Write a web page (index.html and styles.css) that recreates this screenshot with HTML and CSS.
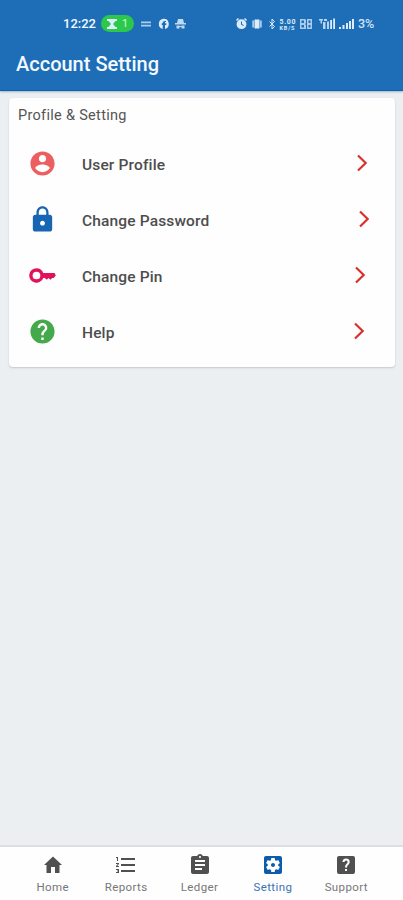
FILE: index.html
```
<!DOCTYPE html>
<html lang="en">
<head>
<meta charset="utf-8">
<title>Account Setting</title>
<link rel="stylesheet" href="styles.css">
</head>
<body>
<header class="header">
  <div class="status">
    <span class="time">12:22</span>
    <span class="pill"><svg width="10" height="10" viewBox="0 0 10 10"><path d="M0 0h10v2H8.500L6 5l2.500 3H10v2H0V8h1.500L4 5 1.500 2H0z"/></svg><span>1</span></span>
    <svg class="notices" width="46" height="12" viewBox="0 0 46 12">
      <path opacity=".75" d="M0 3.500h10v1.800H0zM0 6.700h10v1.800H0z"/>
      <path fill-rule="evenodd" d="M22.500 .8a5.200 5.200 0 0 1 1.500 10.200V7h1.300V5.300H24V4h1V3h-1c-1.500 0-2.300.8-2.300 2.300h-1V7h1v4A5.200 5.200 0 0 1 22.500 .8z"/>
      <path opacity=".85" d="M37 1h5l1 4h2v1.500H34V5h2zM35.500 7.500h3v3h-3zM40.500 7.500h3v3h-3zM38 8h3v1h-3z"/>
    </svg>
    <svg class="system" width="120" height="14" viewBox="0 0 120 14">
      <path fill-rule="evenodd" d="M5.500 2.300a4.900 4.900 0 1 1 0 9.800 4.900 4.900 0 0 1 0-9.800zM5 4.500v3l2.300 1.500.6-.8L6 7V4.500zM0 3l2-2 1 1-2 2zM9 1l2 2-1 1-2-2z"/>
      <path d="M18.500 2.500h5v9h-5z"/><path opacity=".8" d="M16.300 3.500h1.600v7h-1.600zM24.100 3.500h1.600v7h-1.600z"/>
      <path fill="none" stroke="#dcecff" d="M33.500 4.500l5 5-2.500 2.500V2l2.500 2.500-5 5"/>
      <text x="43.500" y="6.500" textLength="16">5.00</text><text x="43.500" y="13" class="unit" textLength="15">KB/S</text>
      <path opacity=".75" fill-rule="evenodd" d="M64 2h5l1 1v3l-1 1 1 1v4H64zM65.500 3.500V6h2.500V3.500zM65.500 8v2.500h2.500V8zM71 2h5v10h-5zM72.500 3.500V6h2V3.500zM72.500 8v2.500h2V8z"/>
      <path opacity=".8" d="M83 2h4v1.500h-1v3h-1.500v-3H83zM88 2h3v2h-3zM87 5h2.500v7H87zM91 4.500h2V12h-2z"/><path d="M94.200 3h1.800v9h-1.800zM97.200 1.500H99V12h-1.800zM103 10h2v2h-2zM106.500 8h2v4h-2zM110 6h2v6h-2zM113 4h2v8h-2zM116 2h2v10h-2z"/>
    </svg>
    <span class="battery">3%</span>
  </div>
  <h1>Account Setting</h1>
</header>
<main class="content">
  <section class="card">
    <h2>Profile &amp; Setting</h2>
    <div class="row">
      <svg class="icon user" viewBox="0 0 24 24"><path d="M12 2C6.480 2 2 6.480 2 12s4.480 10 10 10 10-4.480 10-10S17.520 2 12 2zm0 3c1.660 0 3 1.340 3 3s-1.340 3-3 3-3-1.340-3-3 1.340-3 3-3zm0 14.200c-2.500 0-4.710-1.280-6-3.220.03-1.990 4-3.080 6-3.080 1.990 0 5.970 1.090 6 3.080-1.290 1.940-3.500 3.220-6 3.220z"/></svg>
      <span class="label">User Profile</span>
      <svg class="chevron first" viewBox="0 0 12 18"><path d="M2 1.500L9.700 9 2 16.500"/></svg>
    </div>
    <div class="row">
      <svg class="icon lock" viewBox="0 0 24 24"><path d="M18 8h-1V6c0-2.760-2.240-5-5-5S7 3.240 7 6v2H6c-1.100 0-2 .9-2 2v10c0 1.100.9 2 2 2h12c1.100 0 2-.9 2-2V10c0-1.100-.9-2-2-2zm-6 9c-1.100 0-2-.9-2-2s.9-2 2-2 2 .9 2 2-.9 2-2 2zm3.100-9H8.900V6c0-1.710 1.390-3.100 3.100-3.100 1.710 0 3.100 1.390 3.100 3.100v2z"/></svg>
      <span class="label">Change Password</span>
      <svg class="chevron second" viewBox="0 0 12 18"><path d="M2 1.500L9.700 9 2 16.500"/></svg>
    </div>
    <div class="row">
      <svg class="icon key" viewBox="0 0 24 24"><path fill-rule="evenodd" d="M7 6a6 6 0 1 0 5.650 8H14l1.500 1.500L17 14l1.500 1.500L20 14h1.300L23 12l-1-2h-9.350A6 6 0 0 0 7 6zm0 2.800a3.200 3.200 0 1 1 0 6.400 3.200 3.200 0 0 1 0-6.400z"/></svg>
      <span class="label">Change Pin</span>
      <svg class="chevron third" viewBox="0 0 12 18"><path d="M2 1.500L9.700 9 2 16.500"/></svg>
    </div>
    <div class="row">
      <svg class="icon help" viewBox="0 0 24 24"><path d="M12 2C6.480 2 2 6.480 2 12s4.480 10 10 10 10-4.480 10-10S17.520 2 12 2zm1 17h-2v-2h2v2zm2.070-7.750l-.9.920C13.450 12.900 13 13.500 13 15h-2v-.5c0-1.100.45-2.100 1.170-2.830l1.240-1.260c.37-.36.590-.86.590-1.410 0-1.100-.9-2-2-2s-2 .9-2 2H8c0-2.210 1.790-4 4-4s4 1.790 4 4c0 .88-.36 1.680-.93 2.250z"/></svg>
      <span class="label">Help</span>
      <svg class="chevron fourth" viewBox="0 0 12 18"><path d="M2 1.500L9.700 9 2 16.500"/></svg>
    </div>
  </section>
</main>
<nav class="tabs">
  <a class="tab"><svg viewBox="0 0 24 24"><path d="M10 20v-6h4v6h4.500v-8H21L12 3.500 3 12h2.500v8z"/></svg><span>Home</span></a>
  <a class="tab"><svg viewBox="0 0 24 24"><path d="M2 17h2v.5H3v1h1v.5H2v1h3v-4H2v1zm1-9h1V4H2v1h1v3zm-1 3h1.800L2 13.100v.9h3v-1H3.200L5 10.900V10H2v1zm5-6v2h14V5H7zm0 14h14v-2H7v2zm0-6h14v-2H7v2z"/></svg><span>Reports</span></a>
  <a class="tab"><svg viewBox="0 0 24 24"><path d="M19 3h-4.180C14.400 1.840 13.300 1 12 1c-1.300 0-2.400.84-2.820 2H5c-1.100 0-2 .9-2 2v14c0 1.100.9 2 2 2h14c1.100 0 2-.9 2-2V5c0-1.100-.9-2-2-2zm-7 0c.55 0 1 .45 1 1s-.45 1-1 1-1-.45-1-1 .45-1 1-1zm2 14H7v-2h7v2zm3-4H7v-2h10v2zm0-4H7V7h10v2z"/></svg><span>Ledger</span></a>
  <a class="tab active"><svg viewBox="0 0 24 24"><path d="M12 10c-1.100 0-2 .9-2 2s.9 2 2 2 2-.9 2-2-.9-2-2-2zm7-7H5c-1.110 0-2 .9-2 2v14c0 1.100.89 2 2 2h14c1.110 0 2-.9 2-2V5c0-1.100-.89-2-2-2zm-1.750 9c0 .23-.02.46-.05.680l1.480 1.160c.13.110.17.300.08.450l-1.400 2.420c-.09.150-.27.210-.43.150l-1.740-.7c-.36.280-.76.510-1.180.690l-.26 1.850c-.03.170-.18.300-.35.300h-2.800c-.17 0-.32-.13-.35-.29l-.26-1.850c-.43-.18-.82-.41-1.180-.69l-1.740.7c-.16.060-.34 0-.43-.15l-1.400-2.420c-.09-.15-.05-.34.080-.45l1.480-1.160c-.03-.23-.05-.46-.05-.69 0-.23.020-.46.050-.68l-1.480-1.160c-.13-.11-.17-.3-.08-.45l1.400-2.420c.09-.15.270-.21.430-.15l1.740.7c.36-.28.760-.51 1.180-.69l.26-1.850c.03-.17.180-.3.350-.3h2.800c.17 0 .32.130.35.290l.26 1.850c.43.180.82.410 1.180.690l1.740-.7c.16-.06.340 0 .430.150l1.400 2.420c.09.150.050.340-.08.450l-1.480 1.160c.03.230.050.460.050.690z"/></svg><span>Setting</span></a>
  <a class="tab"><svg viewBox="0 0 24 24"><path fill-rule="evenodd" d="M5 3h14a2 2 0 0 1 2 2v14a2 2 0 0 1-2 2H5a2 2 0 0 1-2-2V5a2 2 0 0 1 2-2zm6 13v2h2v-2zm-2.500-7h2a1.600 1.600 0 1 1 3.200 0c0 1.600-2.700 2-2.700 5.500h2c0-2.400 2.700-3 2.700-5.500a3.600 3.600 0 0 0-7.200 0z"/></svg><span>Support</span></a>
</nav>
</body>
</html>
```
FILE: styles.css
```
* { box-sizing: border-box; }
body {
  margin: 0;
  height: 900px;
  display: flex;
  flex-direction: column;
  background: #ebeff2;
  font-family: Roboto, sans-serif;
  overflow: hidden;
}
svg { display: block; flex: none; }
.header {
  height: 91px;
  background: #1e6eb7;
  border-bottom: 1px solid #1460a8;
  box-shadow: 0 1px 2px #9fb5c9;
  color: #f4f9ff;
}
.status {
  display: flex;
  align-items: center;
  height: 31px;
  padding: 16px 0 0 63px;
  fill: #dcecff;
}
.time { width: 38px; font-size: 13px; font-weight: 500; }
.pill {
  display: flex;
  align-items: center;
  justify-content: center;
  gap: 5px;
  width: 33px;
  height: 17px;
  border-radius: 9px;
  background: #2cc84b;
  color: #d2f8da;
  font-size: 11px;
}
.notices { margin-left: 7px; }
.system { margin-left: 49px; }
.system text { font: 700 7px Roboto, sans-serif; }
.system .unit { font-size: 5.500px; }
.battery { margin-left: 2px; font-size: 12.500px; font-weight: 500; color: #cfe3f8; }
h1 {
  margin: 21px 0 0 16px;
  font-size: 20px;
  line-height: 24px;
  font-weight: 500;
}
.content { flex: 1; padding: 7px 8px 0 9px; }
.card {
  height: 269px;
  padding-top: 9px;
  border-radius: 4px;
  background: #fefefe;
  box-shadow: 0 1px 2px #c4c8cc;
}
h2 {
  margin: 0 0 0 9px;
  font-size: 14.500px;
  line-height: 18px;
  font-weight: 400;
  letter-spacing: .3px;
  color: #555;
}
.row {
  display: flex;
  align-items: center;
  height: 56px;
  padding: 0 25px 0 19px;
}
h2 + .row { margin-top: 12px; }
.icon { width: 29px; height: 29px; margin-top: -4px; }
.user { fill: #ec5f60; }
.lock { fill: #1766b4; }
.key { fill: #e0125b; }
.help { fill: #43a94a; }
.label {
  margin-left: 25px;
  font-size: 15.500px;
  font-weight: 500;
  letter-spacing: .15px;
  color: #4d4d4d;
}
.chevron { width: 12px; height: 18px; margin: -4px 0 0 auto; fill: none; stroke: #d9302b; stroke-width: 2.200; }
.first { margin-right: 2px; }
.second { margin-right: 0; }
.third { margin-right: 4px; }
.fourth { margin-right: 5px; }
.tabs {
  display: flex;
  height: 55px;
  padding: 8px 20px 0 16px;
  border-top: 2px solid #dddfe3;
  background: #fefefe;
}
.tab {
  flex: 1;
  display: flex;
  flex-direction: column;
  align-items: center;
  font-size: 11.500px;
  line-height: 14px;
  letter-spacing: .4px;
  color: #777;
  fill: #505050;
}
.tab svg { width: 24px; height: 24px; margin: -2px 0 3px; }
.active { color: #3974b4; fill: #0d5cab; }
```
